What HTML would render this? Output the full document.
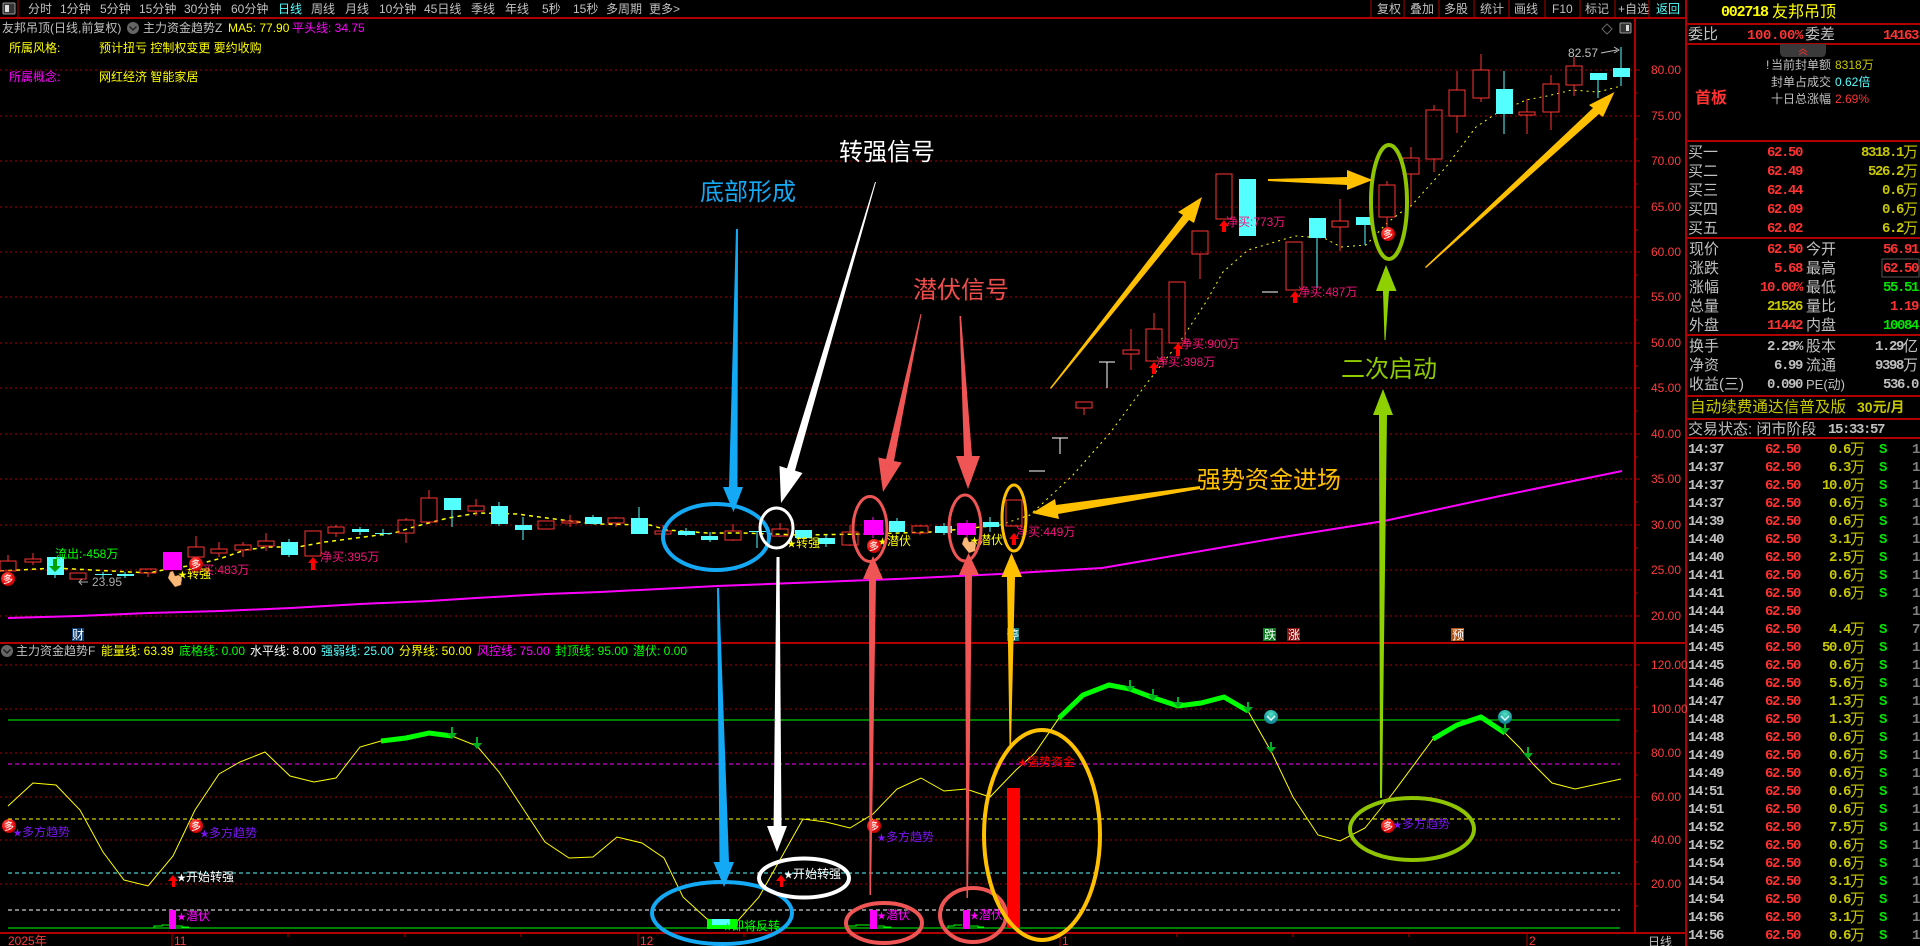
<!DOCTYPE html>
<html lang="zh"><head><meta charset="utf-8"><title>友邦吊顶</title>
<style>
html,body{margin:0;padding:0;background:#000;width:1920px;height:946px;overflow:hidden}
svg{display:block;position:absolute;left:0;top:0}
text{font-family:"Liberation Sans","WenQuanYi Zen Hei","Noto Sans CJK SC",sans-serif;font-size:12px;white-space:pre}
.big text,text.big{font-family:"Noto Sans CJK SC","Liberation Sans",sans-serif;font-size:24px}
.m,.m text{font-family:"Liberation Mono","WenQuanYi Zen Hei",monospace;font-weight:bold;font-size:14px;letter-spacing:-1.4px}
.c15,.c15 text{font-size:15px}
.st{font-size:9px}
.gy{fill:#c0c0c0}.rd{fill:#ff3232}.yl{fill:#c8c800}.gn{fill:#00e600}.wh{fill:#fff}.cy{fill:#54ffff}.mg{fill:#ff00ff}.yy{fill:#ffff00}.g0{fill:#00ff00}
.pk{fill:#f5147c}.pu{fill:#7a14f0}
.e{text-anchor:end}
.grid{stroke:#a80000;stroke-width:1;stroke-dasharray:2 3;fill:none}
.crisp{shape-rendering:crispEdges}
</style></head><body>
<svg width="1920" height="946" viewBox="0 0 1920 946" xmlns="http://www.w3.org/2000/svg">
<defs>
<radialGradient id="ball" cx=".4" cy=".35" r=".7"><stop offset="0" stop-color="#ff7060"/><stop offset=".6" stop-color="#f01010"/><stop offset="1" stop-color="#b00000"/></radialGradient>
<radialGradient id="teal" cx=".5" cy=".3" r=".7"><stop offset="0" stop-color="#50e0c0"/><stop offset="1" stop-color="#0a7a90"/></radialGradient>
</defs>
<rect width="1920" height="946" fill="#000"/>

<!-- frame lines -->
<g class="crisp" fill="none" stroke="#b00000">
<path stroke-width="2" d="M0 18H1686M0 643H1686M0 933H1686"/>
<path stroke-width="2" d="M1635 18V933M1686 0V946"/>
<path d="M18 0V18M1371 0V18M1404 0V18M1439 0V18M1474 0V18M1509 0V18M1545 0V18M1580 0V18M1615 0V18M1649 0V18"/>
<path stroke-width="2" d="M1686 24H1920M1686 44H1920M1686 141H1920M1686 238H1920M1686 335H1920M1686 396H1920M1686 419H1920M1686 438H1920"/>
<path d="M1635 70h5M1635 93h3M1635 116h5M1635 139h3M1635 161h5M1635 184h3M1635 207h5M1635 230h3M1635 252h5M1635 275h3M1635 297h5M1635 320h3M1635 343h5M1635 366h3M1635 388h5M1635 411h3M1635 434h5M1635 457h3M1635 479h5M1635 502h3M1635 525h5M1635 548h3M1635 570h5M1635 593h3M1635 616h5M1635 665h5M1635 687h3M1635 709h5M1635 731h3M1635 753h5M1635 775h3M1635 797h5M1635 819h3M1635 840h5M1635 862h3M1635 884h5M1635 906h3"/>
<path d="M172 933V946M638 933V946M1060 933V946M1527 933V946M288 933v4M405 933v4M521 933v4M744 933v4M850 933v4M1177 933v4M1293 933v4M1409 933v4"/>
</g>

<!-- grid -->
<path class="grid crisp" d="M0 70H1635M0 116H1635M0 161H1635M0 207H1635M0 252H1635M0 297H1635M0 343H1635M0 388H1635M0 434H1635M0 479H1635M0 525H1635M0 570H1635M0 616H1635M0 665H1635M0 709H1635M0 753H1635M0 797H1635M0 840H1635M0 884H1635"/>

<!-- top bar -->
<rect x="3" y="3" width="12" height="11" fill="#333" stroke="#999" rx="1"/><rect x="5" y="5" width="4" height="7" fill="#ddd"/>
<g class="gy">
<text x="28" y="13">分时</text><text x="60" y="13">1分钟</text><text x="100" y="13">5分钟</text><text x="139" y="13">15分钟</text><text x="184" y="13">30分钟</text><text x="231" y="13">60分钟</text>
<text x="278" y="13" class="cy">日线</text><text x="311" y="13">周线</text><text x="345" y="13">月线</text><text x="379" y="13">10分钟</text><text x="424" y="13">45日线</text><text x="471" y="13">季线</text><text x="505" y="13">年线</text><text x="542" y="13">5秒</text><text x="573" y="13">15秒</text><text x="606" y="13">多周期</text><text x="649" y="13">更多&gt;</text>
<text x="1377" y="13">复权</text><text x="1410" y="13">叠加</text><text x="1444" y="13">多股</text><text x="1480" y="13">统计</text><text x="1514" y="13">画线</text><text x="1552" y="13">F10</text><text x="1585" y="13">标记</text><text x="1618" y="13">+自选</text>
<text x="1656" y="13" class="cy">返回</text>
</g>

<!-- status line -->
<text x="2" y="32" class="gy">友邦吊顶(日线,前复权)</text>
<circle cx="133" cy="28" r="6" fill="#666"/><path d="M129.500 26.500l3.500 3.500 3.500-3.500" stroke="#222" stroke-width="1.500" fill="none"/>
<text x="143" y="32" class="gy">主力资金趋势Z</text>
<text x="228" y="32" class="yy">MA5: 77.90</text>
<text x="292" y="32" class="mg">平头线: 34.75</text>
<text x="9" y="52" class="yy">所属风格:</text><text x="99" y="52" class="yy">预计扭亏 控制权变更 要约收购</text>
<text x="9" y="81" class="mg">所属概念:</text><text x="99" y="81" class="yy">网红经济 智能家居</text>

<path d="M1607 24l5 5-5 5-5-5z" fill="none" stroke="#666"/>
<rect x="1620" y="23" width="11" height="10" fill="#333" stroke="#999" rx="1"/><rect x="1626" y="25" width="3" height="6" fill="#ddd"/>

<!-- axis labels -->
<g class="rd" style="fill:#ff3c3c">
<text x="1651" y="74">80.00</text><text x="1651" y="120">75.00</text><text x="1651" y="165">70.00</text><text x="1651" y="211">65.00</text><text x="1651" y="256">60.00</text><text x="1651" y="301">55.00</text><text x="1651" y="347">50.00</text><text x="1651" y="392">45.00</text><text x="1651" y="438">40.00</text><text x="1651" y="483">35.00</text><text x="1651" y="529">30.00</text><text x="1651" y="574">25.00</text><text x="1651" y="620">20.00</text>
<text x="1651" y="669">120.00</text><text x="1651" y="713">100.00</text><text x="1651" y="757">80.00</text><text x="1651" y="801">60.00</text><text x="1651" y="844">40.00</text><text x="1651" y="888">20.00</text>
<text x="8" y="945">2025年</text><text x="174" y="945">11</text><text x="640" y="945">12</text><text x="1062" y="945">1</text><text x="1529" y="945">2</text>
</g>
<text x="1648" y="946" class="gy">日线</text>

<!-- magenta MA -->
<polyline fill="none" stroke="#ff00ff" stroke-width="2" points="8,618 78,616 149,613 220,611 291,608 360,604 429,601 476,598 546,594 600,592 717,586 897,579 1000,574 1102,568 1277,538 1384,521 1500,496 1622,471"/>
<!-- yellow MA -->
<polyline fill="none" stroke="#ffff00" stroke-width="1.500" stroke-dasharray="4 4" points="0,571 19,570 55,568 111,571 149,573 168,569 195,565 222,558 245,550 268,547 298,547 325,542 364,537 394,533 417,526 448,518 478,513 517,514 547,518 586,523 600,524 650,525 667,530 707,533 743,533 800,535 867,534 933,532 1000,525"/>
<polyline fill="none" stroke="#ffff00" stroke-width="1" stroke-dasharray="2 4" points="1000,525 1030,515 1073,475 1110,433 1147,383 1181,340 1206,302 1223,272 1248,250 1295,236 1324,238 1341,247 1366,245 1387,223 1400,213 1412,205 1446,167 1476,127 1497,113 1526,100 1547,96 1572,90 1598,92 1621,86"/>

<!-- red candles -->
<path class="crisp" fill="none" stroke="#ff3232" d="M8 555V561M0 561H16V571H0ZM33 553V559M33 562V565M25 559H41V562H25ZM70 573H86V579H70ZM148 573V577M140 569H156V573H140ZM196 536V547M188 547H204V557H188ZM219 542V549M219 553V557M211 549H227V553H211ZM243 542V545M243 550V557M235 545H251V550H235ZM266 533V541M266 546V551M258 541H274V546H258ZM305 531H321V556H305ZM336 525V527M336 533V537M328 527H344V533H328ZM406 518V520M406 533V543M398 520H414V533H398ZM429 490V498M421 498H437V522H421ZM476 499V506M476 511V516M468 506H484V511H468ZM538 521H554V529H538ZM570 515V521M570 523V527M562 521H578V523H562ZM616 517V518M616 523V527M608 518H624V523H608ZM663 525V531M663 534V536M655 531H671V534H655ZM733 524V531M733 540V541M725 531H741V540H725ZM780 523V529M780 536V537M772 529H788V536H772ZM850 525V532M850 545V546M842 532H858V545H842ZM920 525V526M920 533V535M912 526H928V533H912ZM1006 500H1022V526H1006ZM1084 408V415M1076 402H1092V408H1076ZM1131 329V350M1131 354V370M1123 350H1139V354H1123ZM1154 313V329M1146 329H1162V361H1146ZM1169 282H1185V343H1169ZM1200 254V279M1192 231H1208V254H1192ZM1216 174H1232V219H1216ZM1286 242H1302V290H1286ZM1340 199V221M1340 227V251M1332 221H1348V227H1332ZM1387 181V185M1387 217V227M1379 185H1395V217H1379ZM1411 147V158M1411 174V205M1403 158H1419V174H1403ZM1434 105V110M1434 159V172M1426 110H1442V159H1426ZM1457 71V90M1457 116V133M1449 90H1465V116H1449ZM1481 54V70M1481 98V102M1473 70H1489V98H1473ZM1527 99V112M1527 115V134M1519 112H1535V115H1519ZM1551 75V84M1551 112V130M1543 84H1559V112H1543ZM1574 57V66M1574 85V96M1566 66H1582V85H1566Z"/>
<!-- cyan candles -->
<path class="crisp" fill="none" stroke="#54ffff" d="M55 575V578M103 572V578M125 572V578M289 539V557M360 527V535M383 529V536M452 510V527M499 502V526M523 517V540M593 515V524M639 507V534M686 528V536M710 532V542M757 531V548M826 535V547M897 518V533M944 523V535M990 517V532M1317 238V288M1365 225V245M1504 71V134M1598 80V98M1621 47V86"/>
<path class="crisp" fill="#54ffff" d="M47 557H64V575H47ZM95 574H112V575H95ZM117 574H134V576H117ZM281 542H298V555H281ZM352 529H369V532H352ZM375 533H392V534H375ZM444 498H461V510H444ZM491 506H508V524H491ZM515 525H532V530H515ZM585 517H602V524H585ZM631 518H648V534H631ZM678 531H695V535H678ZM701 536H718V540H701ZM749 531H766V532H749ZM795 530H812V538H795ZM818 538H835V544H818ZM889 521H905V532H889ZM935 526H952V533H935ZM983 522H999V527H983ZM1239 179H1256V236H1239ZM1309 218H1326V238H1309ZM1356 217H1373V225H1356ZM1496 89H1513V114H1496ZM1590 73H1607V80H1590ZM1613 68H1630V77H1613Z"/>
<!-- magenta candles -->
<path class="crisp" fill="#ff00ff" d="M163 552H182V570H163ZM864 520H883V535H864ZM957 523H976V535H957Z"/>
<path class="crisp" stroke="#ff00ff" d="M873 517V538M967 520V538"/>
<!-- white -->
<path class="crisp" stroke="#fff" fill="none" d="M1029 471H1045M1052 438H1068M1060 438V454M1099 362H1115M1107 362V388M1262 292H1278"/>

<!-- main labels -->
<g>
<text x="55" y="558" class="g0">流出:-458万</text>
<path d="M53 559h4v7h4l-6 6-6-6h4z" fill="#00a000"/>
<path d="M88 582h-9M82 579l-3 3 3 3" stroke="#aaa" fill="none"/><text x="92" y="586" fill="#aaa">23.95</text>
<text x="320" y="561" class="pk">净买:395万</text>
<path d="M313 557l5 6h-3v7h-4v-7h-3z" fill="#f00"/>
<text x="190" y="574" class="pk">净买:483万</text>
<text x="178" y="578" class="yy"><tspan class="st">★</tspan>转强</text>
<text x="787" y="547" class="yy"><tspan class="st">★</tspan>转强</text>
<text x="878" y="545" class="yy"><tspan class="st">★</tspan>潜伏</text>
<text x="970" y="544" class="yy"><tspan class="st">★</tspan>潜伏</text>
<text x="1016" y="536" class="pk">净买:449万</text>
<path d="M1014 533l5 6h-3v6h-4v-6h-3z" fill="#f00"/>
<text x="1226" y="226" class="pk">净买:773万</text>
<path d="M1224 220l5 6h-3v6h-4v-6h-3z" fill="#f00"/>
<text x="1298" y="296" class="pk">净买:487万</text>
<path d="M1295 291l5 6h-3v6h-4v-6h-3z" fill="#f00"/>
<text x="1180" y="348" class="pk">净买:900万</text>
<path d="M1178 343l5 6h-3v7h-4v-7h-3z" fill="#f00"/>
<text x="1156" y="366" class="pk">净买:398万</text>
<path d="M1154 362l5 6h-3v6h-4v-6h-3z" fill="#f00"/>
<text x="1568" y="57" fill="#c0c0c0">82.57</text>
<path d="M1601 53l16-3M1614 47l5 3-5 3" stroke="#c0c0c0" fill="none"/>
</g>
<!-- hands -->
<path d="M170 572l3-1 2 5 4-1 3 3-1 7-6 2-4-5-3-4z" fill="#f8b878" stroke="#7a4a20" stroke-width=".5"/>
<path d="M964 538l3-1 2 5 4-1 3 3-1 7-6 2-4-5-3-4z" fill="#f8b878" stroke="#7a4a20" stroke-width=".5"/>

<!-- balls -->
<g text-anchor="middle" fill="#fff">
<circle cx="8" cy="579" r="7" fill="url(#ball)"/><text x="8" y="583" style="font-size:10px">多</text>
<circle cx="196" cy="564" r="7" fill="url(#ball)"/><text x="196" y="568" style="font-size:10px">多</text>
<circle cx="874" cy="546" r="7" fill="url(#ball)"/><text x="874" y="550" style="font-size:10px">多</text>
<circle cx="1388" cy="234" r="7" fill="url(#ball)"/><text x="1388" y="238" style="font-size:10px">多</text>
<circle cx="9" cy="826" r="7" fill="url(#ball)"/><text x="9" y="830" style="font-size:10px">多</text>
<circle cx="196" cy="826" r="7" fill="url(#ball)"/><text x="196" y="830" style="font-size:10px">多</text>
<circle cx="874" cy="826" r="7" fill="url(#ball)"/><text x="874" y="830" style="font-size:10px">多</text>
<circle cx="1388" cy="826" r="7" fill="url(#ball)"/><text x="1388" y="830" style="font-size:10px">多</text>
</g>

<!-- badges -->
<rect x="72" y="628" width="12" height="13" fill="#0d3a6e"/><text x="72" y="639" fill="#fff">财</text>
<rect x="1007" y="628" width="12" height="13" fill="#0a7a7a"/><text x="1007" y="639" fill="#fff">停</text>
<rect x="1263" y="628" width="13" height="13" fill="#0a7a1e"/><text x="1264" y="639" fill="#fff">跌</text>
<rect x="1287" y="628" width="13" height="13" fill="#8a1010"/><text x="1288" y="639" fill="#fff">涨</text>
<rect x="1451" y="628" width="13" height="13" fill="#b05010"/><text x="1452" y="639" fill="#fff">预</text>

<!-- sub header -->
<circle cx="7" cy="651" r="6" fill="#666"/><path d="M3.500 649.500l3.500 3.500 3.500-3.500" stroke="#222" stroke-width="1.500" fill="none"/>
<text x="16" y="655" class="gy">主力资金趋势F</text>
<text x="101" y="655" class="yy">能量线: 63.39</text>
<text x="179" y="655" class="g0">底格线: 0.00</text>
<text x="250" y="655" class="wh">水平线: 8.00</text>
<text x="321" y="655" class="cy">强弱线: 25.00</text>
<text x="399" y="655" class="yy">分界线: 50.00</text>
<text x="477" y="655" class="mg">风控线: 75.00</text>
<text x="555" y="655" class="g0">封顶线: 95.00</text>
<text x="633" y="655" class="g0">潜伏: 0.00</text>

<!-- sub level lines -->
<g class="crisp" fill="none">
<path d="M8 720H1620M8 928H1620" stroke="#00ff00"/>
<path d="M8 764H1620" stroke="#ff00ff" stroke-dasharray="4 3"/>
<path d="M8 819H1620" stroke="#ffff00" stroke-dasharray="4 3"/>
<path d="M8 873H1620" stroke="#54ffff" stroke-dasharray="4 3"/>
<path d="M8 910H1620" stroke="#fff" stroke-dasharray="4 3"/>
<path d="M154 928v-2h8v-1h10M176 926h6v1h7M846 928v-2h10v-1h14M878 926h6v1h7M948 928v-2h6v-1h8M970 926h8v1h6" stroke="#00ff00"/>
</g>

<!-- sub energy line -->
<polyline fill="none" stroke="#ffff00" points="8,806 33,783 56,785 80,810 103,852 124,880 148,886 173,856 195,810 219,774 240,762 265,752 290,776 314,782 336,778 360,747 381,741 406,738 429,733 452,736 477,746 499,772 522,807 545,842 569,858 593,857 617,837 642,843 664,858 683,897 707,919 734,925 759,897 803,819 826,822 850,828 873,814 897,789 921,778 944,791 966,789 990,797 1016,770 1035,753 1059,718 1083,695 1109,685 1130,689 1154,698 1178,706 1201,703 1224,697 1248,711 1272,753 1293,797 1318,835 1340,841 1365,828 1393,793 1433,739 1457,725 1481,717 1505,733 1520,748 1533,764 1552,783 1575,789 1621,779"/>
<g fill="none" stroke="#00ff00" stroke-width="5">
<polyline points="381,741 406,738 429,733 452,736"/>
<polyline points="1059,718 1083,695 1109,685 1130,689 1154,698 1178,706 1201,703 1224,697 1248,711"/>
<polyline points="1433,739 1457,725 1481,717 1505,733"/>
</g>
<path d="M707 919h30v10h-30z" fill="#00ff00"/><path d="M712 919h18v6h-18z" fill="#54ffff"/>

<!-- small green down arrows -->
<g fill="#00b020">
<path d="M451 727h2v6h4l-5 6-5-6h4zM476 737h2v6h4l-5 6-5-6h4zM1129 680h2v6h4l-5 6-5-6h4zM1152 689h2v6h4l-5 6-5-6h4zM1177 697h2v5h4l-5 6-5-6h4zM1247 702h2v5h4l-5 6-5-6h4zM1270 742h2v5h4l-5 6-5-6h4zM1504 722h2v6h4l-5 6-5-6h4zM1527 747h2v6h4l-5 6-5-6h4z"/>
</g>
<circle cx="1271" cy="717" r="7" fill="url(#teal)"/><path d="M1267 716l4 4 4-4" stroke="#e0ffff" stroke-width="1.500" fill="none"/>
<circle cx="1505" cy="717" r="7" fill="url(#teal)"/><path d="M1501 716l4 4 4-4" stroke="#e0ffff" stroke-width="1.500" fill="none"/>

<!-- sub labels -->
<text x="13" y="836" class="pu"><tspan class="st">★</tspan>多方趋势</text><text x="200" y="837" class="pu"><tspan class="st">★</tspan>多方趋势</text><text x="877" y="841" class="pu"><tspan class="st">★</tspan>多方趋势</text><text x="1393" y="828" class="pu"><tspan class="st">★</tspan>多方趋势</text>
<text x="177" y="881" class="wh"><tspan class="st">★</tspan>开始转强</text><text x="784" y="878" class="wh"><tspan class="st">★</tspan>开始转强</text>
<path d="M173 875l5 6h-3v6h-3v-6h-4zM781 875l5 6h-3v6h-3v-6h-4z" fill="#f00"/>
<g class="crisp" fill="#ff00ff"><rect x="169" y="910" width="7" height="19"/><rect x="870" y="910" width="7" height="19"/><rect x="963" y="910" width="7" height="19"/></g>
<text x="177" y="920" class="mg"><tspan class="st">★</tspan>潜伏</text><text x="877" y="919" class="mg"><tspan class="st">★</tspan>潜伏</text><text x="970" y="919" class="mg"><tspan class="st">★</tspan>潜伏</text>
<rect class="crisp" x="1007" y="788" width="13" height="140" fill="#f00"/>
<text x="1018" y="766" fill="#f00"><tspan class="st">★</tspan>强势资金</text>
<text x="723" y="930" class="g0"><tspan class="st">★</tspan>即将反转</text>

<!-- annotation ellipses -->
<g fill="none" stroke-width="4">
<ellipse cx="716" cy="537" rx="53" ry="33" stroke="#14a9f5"/>
<ellipse cx="776.500" cy="528" rx="16.500" ry="20" stroke="#fff" stroke-width="3"/>
<ellipse cx="870" cy="529" rx="17" ry="32.500" stroke="#ef5555" stroke-width="3"/>
<ellipse cx="965" cy="528" rx="16" ry="33" stroke="#ef5555" stroke-width="3"/>
<ellipse cx="1014" cy="518" rx="12" ry="33" stroke="#ffc000" stroke-width="3"/>
<ellipse cx="1389" cy="202" rx="18" ry="57" stroke="#8fc400"/>
<ellipse cx="722" cy="913" rx="70" ry="31" stroke="#14a9f5"/>
<ellipse cx="804" cy="878" rx="45" ry="19.500" stroke="#fff"/>
<ellipse cx="884" cy="923" rx="38" ry="20" stroke="#ef5555"/>
<ellipse cx="973" cy="915" rx="33" ry="27" stroke="#ef5555"/>
<ellipse cx="1042" cy="835" rx="58" ry="105" stroke="#ffc000"/>
<ellipse cx="1412" cy="829" rx="62" ry="31" stroke="#8fc400"/>
</g>

<!-- annotation arrows -->
<polygon fill="#14a9f5" points="736,229 738,229 737.500,487 743,487 733.500,512 723,487 729,487"/>
<polygon fill="#14a9f5" points="717,588 719,588 729,862 734,862 724,887 713.500,862 719.500,862"/>
<polygon fill="#fff" points="875,182 876,182 795,470.600 802.500,473 781,503 779.500,466 787,468.400"/>
<polygon fill="#fff" points="776.500,557 779.500,557 781.500,826 787,826 777,852 767,826 773.600,826"/>
<polygon fill="#ef5555" points="920.500,314 921.500,314 894,461 901.700,462.500 883,492 878.300,457.500 886,459"/>
<polygon fill="#ef5555" points="959.500,316 961,316 972,456 980,456 968,489 956,456 964,456"/>
<polygon fill="#ef5555" points="873,556 883,579 876,579 871,895 869.500,895 869,579 863,579"/>
<polygon fill="#ef5555" points="968.500,553 979,575 972,575 968,898 966.500,898 965,575 959,575"/>
<polygon fill="#ffc000" points="1011.500,553 1022,577 1015,577 1011,745 1009.500,745 1007,577 1001.500,577"/>
<polygon fill="#ffc000" points="1050,388 1051,389 1189,220 1194,223 1202,197 1178,212 1183,215"/>
<polygon fill="#ffc000" points="1268,179 1347,177 1347,170 1372.500,180 1347,190 1347,185 1268,181"/>
<polygon fill="#ffc000" points="1425,267 1426,268 1599,114 1603,117 1614.500,92 1589,105 1593,108"/>
<polygon fill="#ffc000" points="1200,486 1200,489 1058,514 1059,519 1032,513 1055,499 1056,505"/>
<polygon fill="#8fd000" points="1386,265 1396.500,291 1389,291 1385.500,340 1384.500,340 1383,291 1376,291"/>
<polygon fill="#8fd000" points="1383,389 1393,415 1387,415 1382,798 1380,798 1379,415 1373,415"/>

<!-- annotation text -->
<text x="700" y="200" class="big" fill="#14a9f5">底部形成</text>
<text x="839" y="160" class="big" fill="#fff">转强信号</text>
<text x="913" y="298" class="big" fill="#ef4c4c">潜伏信号</text>
<text x="1197" y="488" class="big" fill="#ffc000">强势资金进场</text>
<text x="1341" y="377" class="big" fill="#8fcc00">二次启动</text>

<!-- right panel -->
<text x="1721" y="16" class="m yy" style="font-size:15px;letter-spacing:-1.2px">002718</text>
<text x="1772" y="17" class="yy" style="font-size:16px">友邦吊顶</text>
<text x="1688" y="39" class="c15 gy">委比</text><text x="1747" y="39" class="m rd" style="letter-spacing:-.4px">100.00%</text><text x="1805" y="39" class="c15 gy">委差</text><text x="1918" y="39" class="m rd e">14163</text>
<path d="M1780 44h46v8q0 5-5 5h-36q-5 0-5-5z" fill="#3a3a3a"/><path d="M1799 52l4-3 4 3M1799 55l4-3 4 3" stroke="#e03030" fill="none"/>
<text x="1766" y="69" class="gy">!</text>
<g class="gy"><text x="1771" y="69">当前封单额</text><text x="1771" y="86">封单占成交</text><text x="1771" y="103">十日总涨幅</text></g>
<text x="1835" y="69" class="yl">8318万</text><text x="1835" y="86" class="cy">0.62倍</text><text x="1835" y="103" class="rd">2.69%</text>
<text x="1695" y="103" class="rd" style="font-size:16px;font-weight:bold">首板</text>

<g class="c15 gy"><text x="1688" y="157">买一</text><text x="1688" y="176">买二</text><text x="1688" y="195">买三</text><text x="1688" y="214">买四</text><text x="1688" y="233">买五</text></g>
<g class="m rd"><text x="1767" y="156">62.50</text><text x="1767" y="175">62.49</text><text x="1767" y="194">62.44</text><text x="1767" y="213">62.09</text><text x="1767" y="232">62.02</text></g>
<g class="m yl e"><text x="1903" y="156">8318.1</text><text x="1903" y="175">526.2</text><text x="1903" y="194">0.6</text><text x="1903" y="213">0.6</text><text x="1903" y="232">6.2</text></g>
<g class="c15 yl"><text x="1903" y="157">万</text><text x="1903" y="176">万</text><text x="1903" y="195">万</text><text x="1903" y="214">万</text><text x="1903" y="233">万</text></g>

<g class="c15 gy"><text x="1689" y="254">现价</text><text x="1689" y="273">涨跌</text><text x="1689" y="292">涨幅</text><text x="1689" y="311">总量</text><text x="1689" y="330">外盘</text>
<text x="1806" y="254">今开</text><text x="1806" y="273">最高</text><text x="1806" y="292">最低</text><text x="1806" y="311">量比</text><text x="1806" y="330">内盘</text>
<text x="1689" y="351">换手</text><text x="1689" y="370">净资</text><text x="1689" y="389">收益(三)</text><text x="1806" y="351">股本</text><text x="1806" y="370">流通</text><text x="1806" y="389" style="font-size:13px">PE(动)</text></g>
<g class="m e">
<text x="1802" y="253" class="rd">62.50</text><text x="1802" y="272" class="rd">5.68</text><text x="1802" y="291" class="rd">10.00%</text><text x="1802" y="310" class="yl">21526</text><text x="1802" y="329" class="rd">11442</text>
<text x="1918" y="253" class="rd">56.91</text><text x="1918" y="272" class="rd">62.50</text><text x="1918" y="291" class="gn">55.51</text><text x="1918" y="310" class="rd">1.19</text><text x="1918" y="329" class="gn">10084</text>
<text x="1802" y="350" class="gy">2.29%</text><text x="1802" y="369" class="gy">6.99</text><text x="1802" y="388" class="gy">0.090</text>
<text x="1903" y="350" class="gy">1.29</text><text x="1903" y="369" class="gy">9398</text><text x="1918" y="388" class="gy">536.0</text>
</g>
<text x="1903" y="351" class="c15 gy">亿</text><text x="1903" y="370" class="c15 gy">万</text>
<rect class="crisp" x="1882" y="259" width="37" height="18" fill="none" stroke="#555"/>
<text x="1690" y="412" class="c15 yl" style="font-size:15.600px">自动续费通达信普及版</text>
<text x="1857" y="412" class="yl" style="font-size:14px;font-weight:bold">30元/月</text>
<text x="1688" y="434" class="c15 gy">交易状态: 闭市阶段</text>
<text x="1828" y="433" class="m gy">15:33:57</text>

<!-- ticks table -->
<g class="m gy">
<text x="1688" y="453">14:37</text><text x="1688" y="471">14:37</text><text x="1688" y="489">14:37</text><text x="1688" y="507">14:37</text><text x="1688" y="525">14:39</text><text x="1688" y="543">14:40</text><text x="1688" y="561">14:40</text><text x="1688" y="579">14:41</text><text x="1688" y="597">14:41</text><text x="1688" y="615">14:44</text><text x="1688" y="633">14:45</text><text x="1688" y="651">14:45</text><text x="1688" y="669">14:45</text><text x="1688" y="687">14:46</text><text x="1688" y="705">14:47</text><text x="1688" y="723">14:48</text><text x="1688" y="741">14:48</text><text x="1688" y="759">14:49</text><text x="1688" y="777">14:49</text><text x="1688" y="795">14:51</text><text x="1688" y="813">14:51</text><text x="1688" y="831">14:52</text><text x="1688" y="849">14:52</text><text x="1688" y="867">14:54</text><text x="1688" y="885">14:54</text><text x="1688" y="903">14:54</text><text x="1688" y="921">14:56</text><text x="1688" y="939">14:56</text>
</g>
<g class="m rd">
<text x="1765" y="453">62.50</text><text x="1765" y="471">62.50</text><text x="1765" y="489">62.50</text><text x="1765" y="507">62.50</text><text x="1765" y="525">62.50</text><text x="1765" y="543">62.50</text><text x="1765" y="561">62.50</text><text x="1765" y="579">62.50</text><text x="1765" y="597">62.50</text><text x="1765" y="615">62.50</text><text x="1765" y="633">62.50</text><text x="1765" y="651">62.50</text><text x="1765" y="669">62.50</text><text x="1765" y="687">62.50</text><text x="1765" y="705">62.50</text><text x="1765" y="723">62.50</text><text x="1765" y="741">62.50</text><text x="1765" y="759">62.50</text><text x="1765" y="777">62.50</text><text x="1765" y="795">62.50</text><text x="1765" y="813">62.50</text><text x="1765" y="831">62.50</text><text x="1765" y="849">62.50</text><text x="1765" y="867">62.50</text><text x="1765" y="885">62.50</text><text x="1765" y="903">62.50</text><text x="1765" y="921">62.50</text><text x="1765" y="939">62.50</text>
</g>
<g class="m yl e">
<text x="1850" y="453">0.6</text><text x="1850" y="471">6.3</text><text x="1850" y="489">10.0</text><text x="1850" y="507">0.6</text><text x="1850" y="525">0.6</text><text x="1850" y="543">3.1</text><text x="1850" y="561">2.5</text><text x="1850" y="579">0.6</text><text x="1850" y="597">0.6</text><text x="1850" y="633">4.4</text><text x="1850" y="651">50.0</text><text x="1850" y="669">0.6</text><text x="1850" y="687">5.6</text><text x="1850" y="705">1.3</text><text x="1850" y="723">1.3</text><text x="1850" y="741">0.6</text><text x="1850" y="759">0.6</text><text x="1850" y="777">0.6</text><text x="1850" y="795">0.6</text><text x="1850" y="813">0.6</text><text x="1850" y="831">7.5</text><text x="1850" y="849">0.6</text><text x="1850" y="867">0.6</text><text x="1850" y="885">3.1</text><text x="1850" y="903">0.6</text><text x="1850" y="921">3.1</text><text x="1850" y="939">0.6</text>
</g>
<g class="c15 yl">
<text x="1850" y="454">万</text><text x="1850" y="472">万</text><text x="1850" y="490">万</text><text x="1850" y="508">万</text><text x="1850" y="526">万</text><text x="1850" y="544">万</text><text x="1850" y="562">万</text><text x="1850" y="580">万</text><text x="1850" y="598">万</text><text x="1850" y="634">万</text><text x="1850" y="652">万</text><text x="1850" y="670">万</text><text x="1850" y="688">万</text><text x="1850" y="706">万</text><text x="1850" y="724">万</text><text x="1850" y="742">万</text><text x="1850" y="760">万</text><text x="1850" y="778">万</text><text x="1850" y="796">万</text><text x="1850" y="814">万</text><text x="1850" y="832">万</text><text x="1850" y="850">万</text><text x="1850" y="868">万</text><text x="1850" y="886">万</text><text x="1850" y="904">万</text><text x="1850" y="922">万</text><text x="1850" y="940">万</text>
</g>
<g class="m gn">
<text x="1879" y="453">S</text><text x="1879" y="471">S</text><text x="1879" y="489">S</text><text x="1879" y="507">S</text><text x="1879" y="525">S</text><text x="1879" y="543">S</text><text x="1879" y="561">S</text><text x="1879" y="579">S</text><text x="1879" y="597">S</text><text x="1879" y="633">S</text><text x="1879" y="651">S</text><text x="1879" y="669">S</text><text x="1879" y="687">S</text><text x="1879" y="705">S</text><text x="1879" y="723">S</text><text x="1879" y="741">S</text><text x="1879" y="759">S</text><text x="1879" y="777">S</text><text x="1879" y="795">S</text><text x="1879" y="813">S</text><text x="1879" y="831">S</text><text x="1879" y="849">S</text><text x="1879" y="867">S</text><text x="1879" y="885">S</text><text x="1879" y="903">S</text><text x="1879" y="921">S</text><text x="1879" y="939">S</text>
</g>
<g class="m" fill="#808080">
<text x="1912" y="453">1</text><text x="1912" y="471">1</text><text x="1912" y="489">1</text><text x="1912" y="507">1</text><text x="1912" y="525">1</text><text x="1912" y="543">1</text><text x="1912" y="561">1</text><text x="1912" y="579">1</text><text x="1912" y="597">1</text><text x="1912" y="615">1</text><text x="1912" y="633">7</text><text x="1912" y="651">1</text><text x="1912" y="669">1</text><text x="1912" y="687">1</text><text x="1912" y="705">1</text><text x="1912" y="723">1</text><text x="1912" y="741">1</text><text x="1912" y="759">1</text><text x="1912" y="777">1</text><text x="1912" y="795">1</text><text x="1912" y="813">1</text><text x="1912" y="831">1</text><text x="1912" y="849">1</text><text x="1912" y="867">1</text><text x="1912" y="885">1</text><text x="1912" y="903">1</text><text x="1912" y="921">1</text><text x="1912" y="939">1</text>
</g>
</svg>
</body></html>
